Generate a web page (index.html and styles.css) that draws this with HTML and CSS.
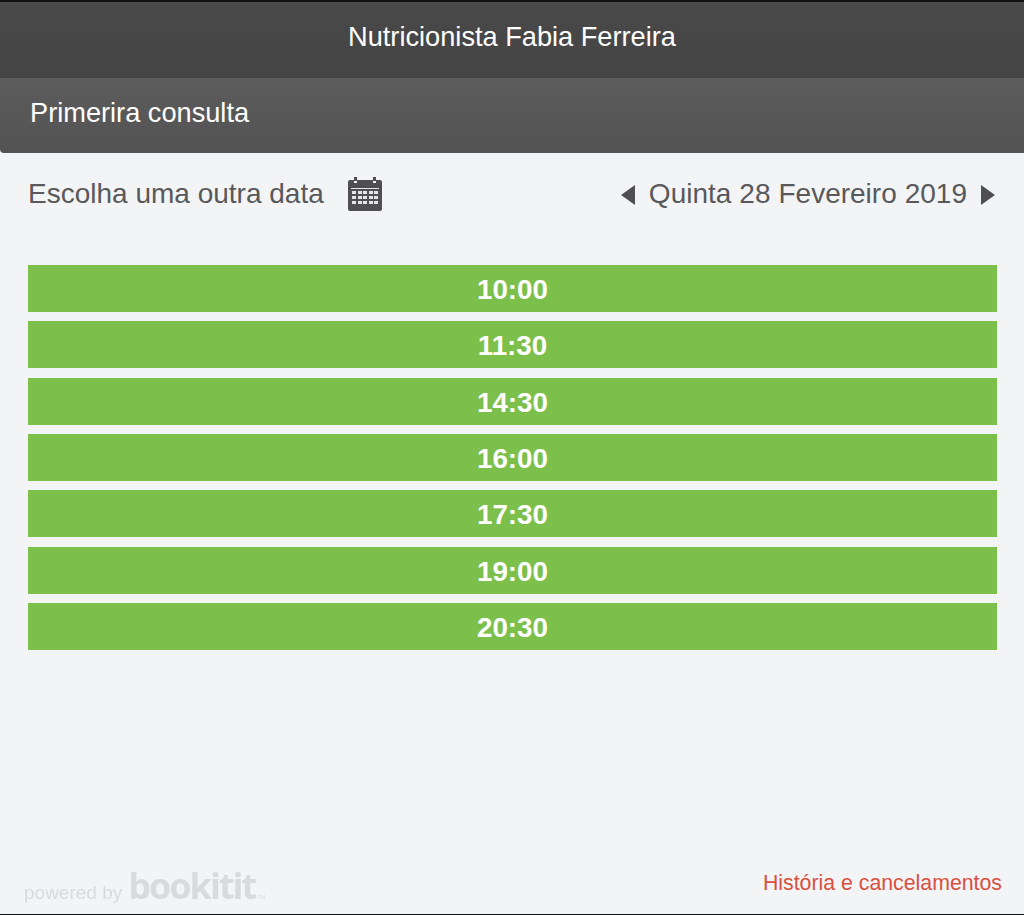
FILE: index.html
```html
<!DOCTYPE html>
<html lang="pt">
<head>
  <meta charset="UTF-8" />
  <title>Nutricionista Fabia Ferreira</title>
  <link rel="stylesheet" href="styles.css">
</head>
<body>
  <div class="widget">
    <header class="top-bar">Nutricionista Fabia Ferreira</header>
    <div class="service-bar">Primerira consulta</div>

    <main class="content">
      <div class="date-row">
        <div class="date-pick">
          <span>Escolha uma outra data</span>
          <svg class="calendar-icon" width="36" height="36" viewBox="0 0 36 36" aria-hidden="true">
            <path fill="#4f4f51" d="M7 1h3v4H7zM26 1h3v4h-3z"/>
            <path fill="#4f4f51" d="M3 4h4v3h3V4h16v3h3V4h4a2 2 0 0 1 2 2v27a2 2 0 0 1-2 2H3a2 2 0 0 1-2-2V6a2 2 0 0 1 2-2z"/>
            <g fill="#e4e5e7">
              <path d="M4 12h28v1H4z"/>
              <path d="M5 15h4v3H5zM11 15h4v3h-4zM16 15h4v3h-4zM22 15h4v3h-4zM27 15h4v3h-4z"/>
              <path d="M5 20h4v3H5zM11 20h4v3h-4zM16 20h4v3h-4zM22 20h4v3h-4zM27 20h4v3h-4z"/>
              <path d="M5 25h4v3H5zM11 25h4v3h-4zM16 25h4v3h-4zM22 25h4v3h-4zM27 25h4v3h-4z"/>
            </g>
          </svg>
        </div>
        <div class="date-nav">
          <span class="arrow arrow-left"></span>
          <span>Quinta 28 Fevereiro 2019</span>
          <span class="arrow arrow-right"></span>
        </div>
      </div>

      <div class="slots">
        <a href="#" class="slot">10:00</a>
        <a href="#" class="slot">11:30</a>
        <a href="#" class="slot">14:30</a>
        <a href="#" class="slot">16:00</a>
        <a href="#" class="slot">17:30</a>
        <a href="#" class="slot">19:00</a>
        <a href="#" class="slot">20:30</a>
      </div>
    </main>

    <footer class="footer">
      <div class="powered">
        <span class="powered-by">powered by</span>
        <span class="brand">bookitit</span>
        <span class="brand-tm">TM</span>
      </div>
      <a href="#" class="history-link">História e cancelamentos</a>
    </footer>
  </div>
</body>
</html>
```

FILE: styles.css
```css
* {
  margin: 0;
  padding: 0;
  box-sizing: border-box;
}

html,
body {
  height: 915px;
  overflow: hidden;
}

body {
  font-family: 'Liberation Sans', Arial, sans-serif;
  background: #1a1a1a;
}

.widget {
  display: flex;
  flex-direction: column;
  height: 915px;
  padding: 2px 0 1px;
  background: #f3f4f6;
  box-shadow: inset 0 2px 0 #111, inset 0 -1px 0 #111;
}

/* Header bars */
.top-bar {
  height: 76px;
  flex-shrink: 0;
  display: flex;
  align-items: center;
  justify-content: center;
  padding-bottom: 7px;
  background: linear-gradient(#494949, #444);
  color: #fff;
  font-size: 27.2px;
}

.service-bar {
  height: 75px;
  flex-shrink: 0;
  display: flex;
  align-items: center;
  padding-left: 30px;
  padding-bottom: 5px;
  background: linear-gradient(#5c5c5c, #535353);
  border-bottom-left-radius: 4px;
  color: #fff;
  font-size: 27.2px;
}

/* Date row */
.content {
  flex: 1;
  padding: 0 27px 0 28px;
}

.date-row {
  height: 112px;
  padding-bottom: 31px;
  display: flex;
  align-items: center;
  justify-content: space-between;
  color: #59595b;
  font-size: 28px;
}

.date-pick {
  display: flex;
  align-items: center;
  gap: 23px;
}

.calendar-icon {
  display: block;
  margin-top: 1px;
}

.date-nav {
  display: flex;
  align-items: center;
  gap: 14px;
  margin-right: 2px;
  word-spacing: 0.2px;
}

.arrow {
  width: 0;
  height: 0;
  border-top: 10px solid transparent;
  border-bottom: 10px solid transparent;
  margin-top: 2px;
}

.arrow-left {
  border-right: 14px solid #4f4f51;
}

.arrow-right {
  border-left: 14px solid #4f4f51;
}

/* Time slots */
.slots {
  display: flex;
  flex-direction: column;
  gap: 9.33px;
}

.slot {
  display: block;
  height: 47px;
  line-height: 50px;
  background: #7dbf4b;
  color: #fff;
  font-size: 27.8px;
  font-weight: 700;
  text-align: center;
  text-decoration: none;
}

/* Footer */
.footer {
  height: 58px;
  flex-shrink: 0;
  display: flex;
  align-items: flex-start;
  justify-content: space-between;
  padding: 0 22px 0 24px;
}

.powered {
  display: flex;
  align-items: baseline;
  margin-top: 10px;
  color: #d9dadc;
  filter: blur(0.6px);
}

.powered-by {
  font-size: 19px;
  margin-right: 6px;
}

.brand {
  font-family: 'Open Sans', sans-serif;
  font-size: 36px;
  font-weight: 700;
  line-height: 40px;
  letter-spacing: -2px;
}

.brand-tm {
  font-size: 5px;
  margin-left: 3px;
}

.history-link {
  margin-top: 15px;
  color: #d9503f;
  font-size: 21.3px;
  text-decoration: none;
}
```
